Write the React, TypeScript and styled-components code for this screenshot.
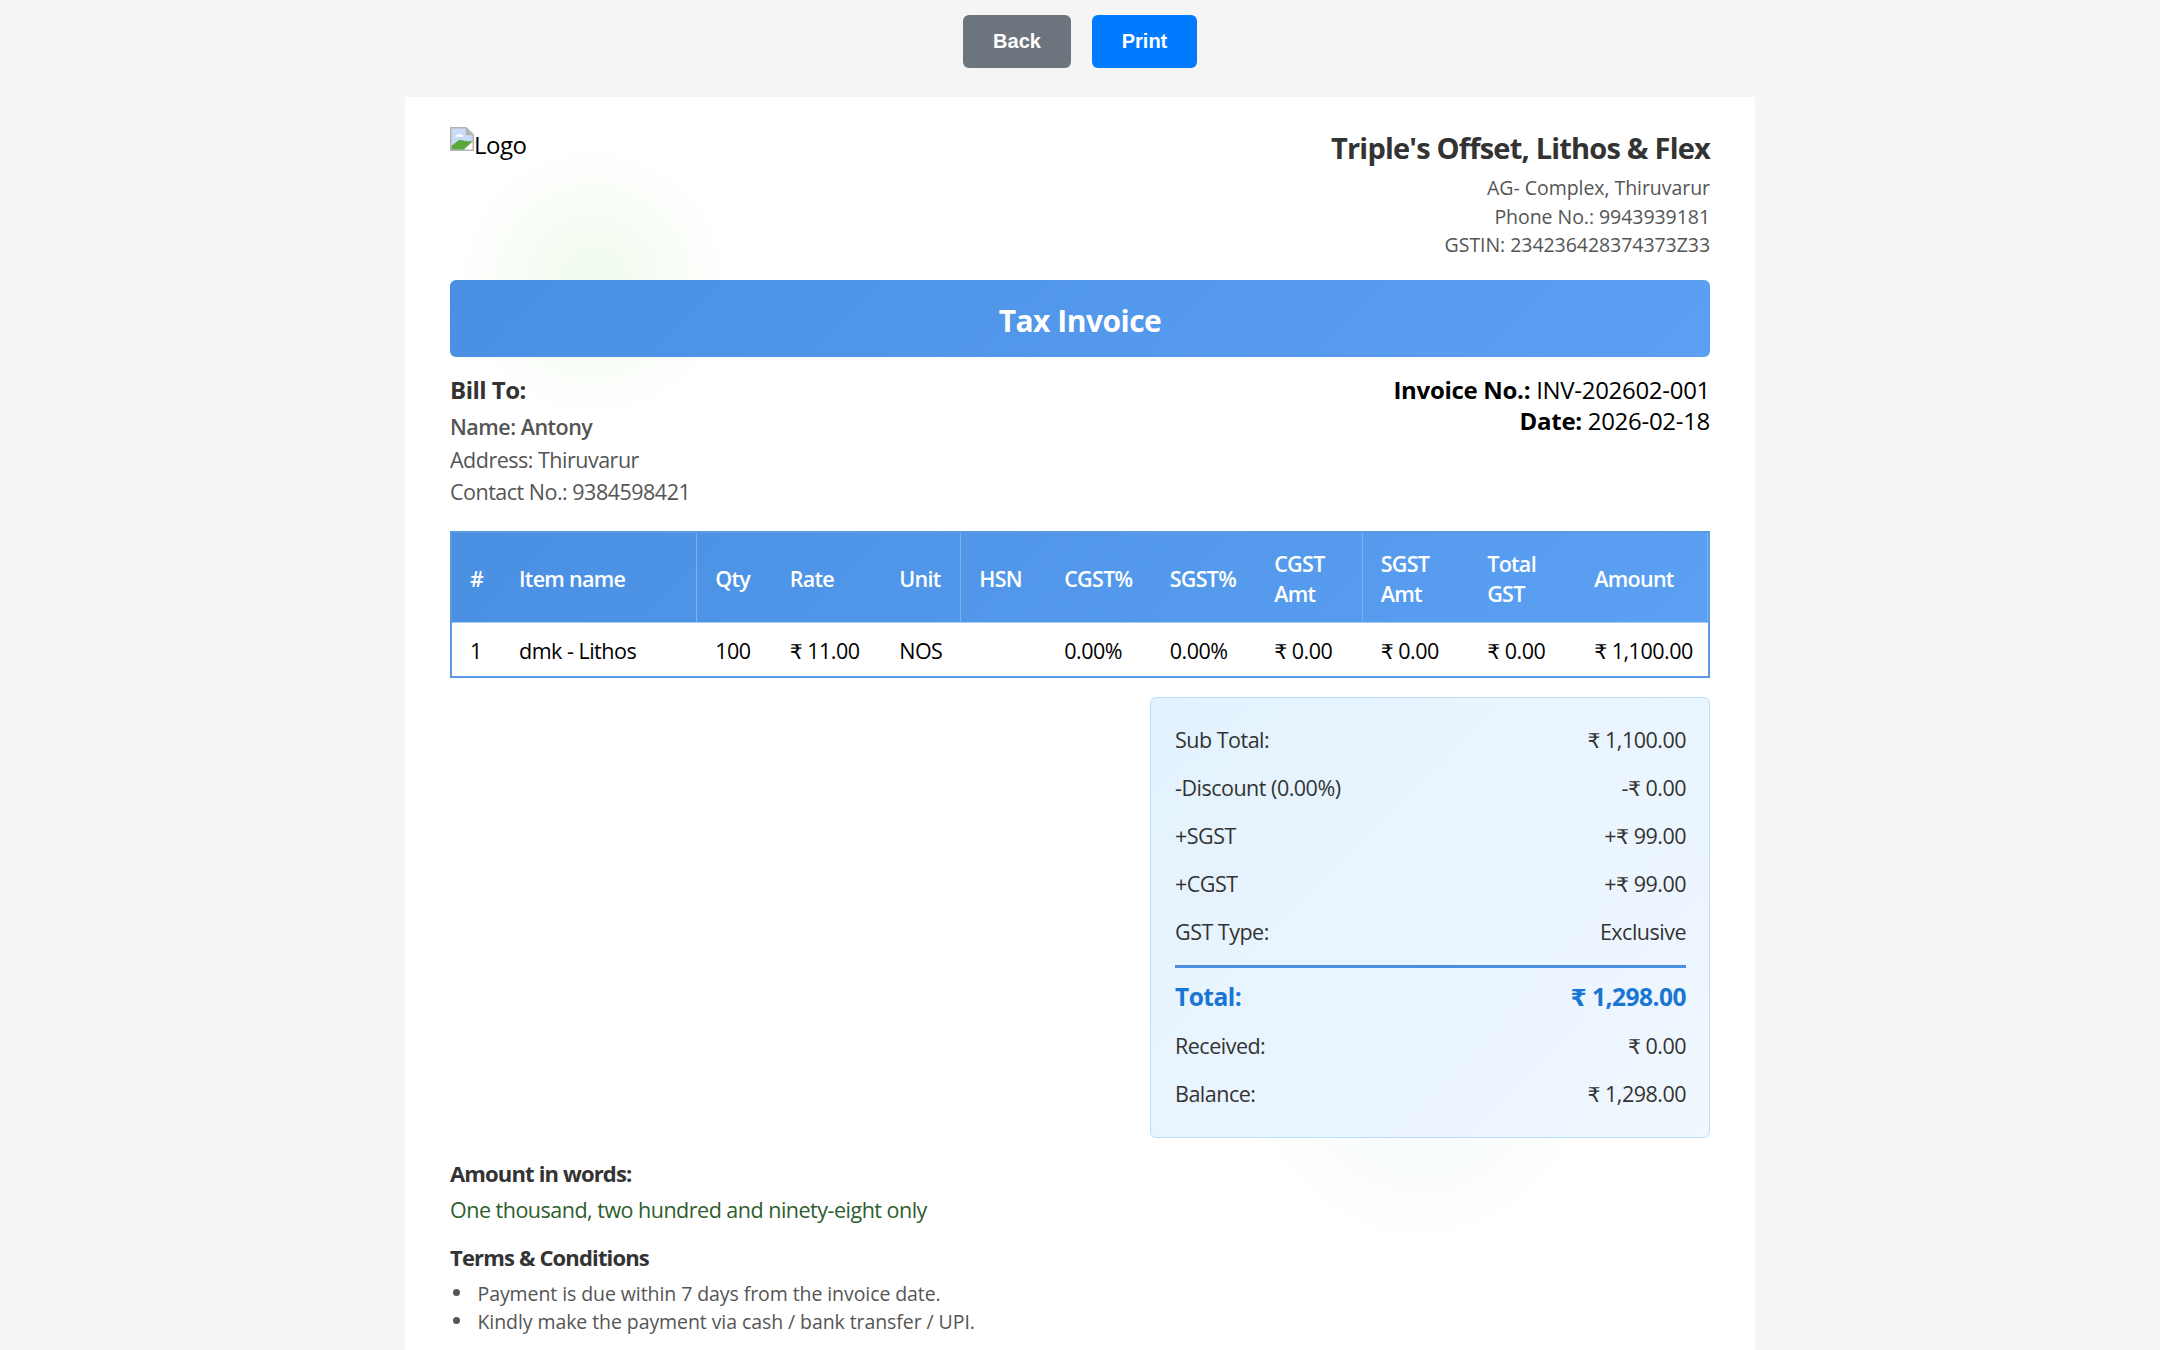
import React from 'react';
import styled, { createGlobalStyle } from 'styled-components';

const GlobalStyle = createGlobalStyle`
  html, body {
    margin: 0;
    padding: 0;
    height: 1350px;
    overflow: hidden;
    background: #f5f5f5;
  }
  * {
    box-sizing: border-box;
  }
`;

const Toolbar = styled.div`
  display: flex;
  justify-content: center;
  gap: 21px;
  padding: 15px 0 29px;
`;

const ActionButton = styled.button<{ $color: string }>`
  width: ${(p) => (p.$color === '#6c757d' ? 108 : 105)}px;
  height: 53px;
  border: none;
  border-radius: 6px;
  background: ${(p) => p.$color};
  color: #fff;
  font-family: 'Liberation Sans', Arial, sans-serif;
  font-size: 20px;
  font-weight: 700;
  padding: 0;
`;

const Sheet = styled.div`
  width: 1350px;
  height: 1253px;
  margin: 0 auto;
  padding: 30px 45px 0;
  overflow: hidden;
  color: #333;
  font-family: 'Open Sans', sans-serif;
  letter-spacing: -0.5px;
  background:
    radial-gradient(circle 140px at 188px 185px, #f0fbec 0%, rgba(240, 251, 236, 0) 100%),
    radial-gradient(circle 181px at 1015px 977px, #f4faf9 0%, rgba(244, 250, 249, 0) 100%),
    #fff;
`;

const Header = styled.header`
  display: flex;
  justify-content: space-between;
  align-items: flex-start;
  margin-bottom: 20.5px;
`;

const LogoSlot = styled.div`
  display: flex;
  align-items: flex-start;
  color: #000;
  font-size: 24px;
  line-height: 36px;
`;

const CompanyBlock = styled.div`
  text-align: right;
`;

const CompanyName = styled.h2`
  margin: 0 0 5px;
  font-size: 29px;
  line-height: 42px;
  font-weight: 700;
  letter-spacing: -0.8px;
  color: #333;
`;

const CompanyLine = styled.div`
  font-size: 19.5px;
  line-height: 28.5px;
  letter-spacing: -0.05px;
  color: #555;
`;

const Banner = styled.div`
  height: 77px;
  border-radius: 6px;
  background: linear-gradient(135deg, #4a90e2 0%, #5ba0f2 100%);
  color: #fff;
  font-size: 30px;
  font-weight: 700;
  line-height: 82px;
  text-align: center;
`;

const MetaRow = styled.section`
  display: flex;
  justify-content: space-between;
  margin: 17px 0 22.5px;
`;

const BillTitle = styled.div`
  font-size: 24px;
  font-weight: 700;
  line-height: 31px;
  color: #333;
  margin-bottom: 6px;
`;

const BillLine = styled.div<{ $strong?: boolean }>`
  font-size: 21.5px;
  line-height: 32.5px;
  color: #555;
  font-weight: ${(p) => (p.$strong ? 600 : 400)};
`;

const InvoiceMeta = styled.div`
  text-align: right;
  font-size: 24px;
  line-height: 31px;
  letter-spacing: -0.3px;
  color: #000;
  b {
    font-weight: 700;
  }
`;

const ItemsTable = styled.table`
  width: 1260px;
  border-collapse: separate;
  border-spacing: 0;
  table-layout: fixed;
  border: 2px solid #5a9ae6;
  font-size: 21.5px;
  color: #000;
`;

const HeadRow = styled.tr`
  background: linear-gradient(135deg, #4a90e2 0%, #5ba0f2 100%);
`;

const Th = styled.th<{ $w: number; $line?: boolean }>`
  width: ${(p) => p.$w}px;
  height: 89px;
  padding: 2px 0 0 18px;
  color: #fff;
  font-size: 21.5px;
  font-weight: 600;
  line-height: 30px;
  letter-spacing: -0.7px;
  text-align: left;
  border-right: ${(p) => (p.$line ? '1px solid #7fb0ec' : 'none')};
`;

const Td = styled.td`
  height: 54px;
  padding: 2px 0 0 18px;
  line-height: 30px;
  white-space: nowrap;
  border-top: 1px solid #a9cbf3;
`;

const Rupee = styled.span`
  font-family: 'DejaVu Sans', sans-serif;
  font-size: 0.95em;
  line-height: 1;
`;

const SummaryRow = styled.section`
  display: flex;
  justify-content: flex-end;
  margin: 19px 0 20px;
`;

const SummaryBox = styled.div`
  width: 560px;
  height: 441px;
  padding: 17px 23px 0 24px;
  border: 1.5px solid #bbdefb;
  border-radius: 6px;
  background: linear-gradient(135deg, #e3f2fd 0%, #f0f7ff 100%);
`;

const SummaryLine = styled.div<{ $total?: boolean }>`
  display: flex;
  justify-content: space-between;
  align-items: center;
  height: ${(p) => (p.$total ? 50 : 48)}px;
  font-size: ${(p) => (p.$total ? 24.5 : 21.5)}px;
  font-weight: ${(p) => (p.$total ? 700 : 400)};
  color: ${(p) => (p.$total ? '#1976d2' : '#333')};
`;

const SummaryRule = styled.hr`
  height: 3px;
  margin: 10px 0 3px;
  border: none;
  background: #4a90e2;
`;

const SectionTitle = styled.div`
  font-size: 22px;
  font-weight: 700;
  line-height: 30px;
  letter-spacing: -0.85px;
  color: #333;
`;

const Words = styled.div`
  font-size: 21.5px;
  line-height: 30px;
  color: #2e5d2e;
  margin: 7px 0 17px;
`;

const Terms = styled.ul`
  margin: 8px 0 0;
  padding: 0;
  list-style: none;
  font-size: 19.5px;
  line-height: 28px;
  letter-spacing: -0.08px;
  color: #555;
`;

const Term = styled.li`
  display: flex;
  &::before {
    content: '';
    flex: none;
    width: 7px;
    height: 7px;
    margin: 9px 17.5px 0 3px;
    border-radius: 50%;
    background: #555;
  }
`;

const BrokenImage = () => (
  <svg width="24" height="24" viewBox="0 0 16 16" style={{ flex: 'none' }}>
    <path d="M0 0H11L16 5V16H0Z" fill="#b4b4b4" />
    <path d="M1 1H10.5V5.5H15V9.5L9 15H1Z" fill="#c9dbf9" />
    <path d="M3.5 6.5C4 4 8 4 9 6.5Z" fill="#fff" />
    <path d="M1 15V12.5L5.5 9C7.5 8 9.5 9.5 12 9.5L15 9.5L9 15Z" fill="#5aa83a" />
    <path d="M15 10V15H9.5Z" fill="#fff" />
  </svg>
);

// the rupee sign comes from another family, Open Sans draws it too small
const money = (text: string) => {
  const at = text.indexOf('₹');
  if (at < 0) return text;
  return (
    <>
      {text.slice(0, at)}
      <Rupee>₹</Rupee>
      {text.slice(at + 1)}
    </>
  );
};

const columns: [string, number, boolean?][] = [
  ['#', 49],
  ['Item name', 196.2, true],
  ['Qty', 74.5],
  ['Rate', 109.5],
  ['Unit', 80, true],
  ['HSN', 85],
  ['CGST%', 105.5],
  ['SGST%', 104.5],
  ['CGST Amt', 106.5, true],
  ['SGST Amt', 106.5],
  ['Total GST', 107],
  ['Amount', 131.8],
];

const rowCells = ['1', 'dmk - Lithos', '100', '₹ 11.00', 'NOS', '', '0.00%', '0.00%', '₹ 0.00', '₹ 0.00', '₹ 0.00', '₹ 1,100.00'];

const summaryTop = [
  ['Sub Total:', '₹ 1,100.00'],
  ['-Discount (0.00%)', '-₹ 0.00'],
  ['+SGST', '+₹ 99.00'],
  ['+CGST', '+₹ 99.00'],
  ['GST Type:', 'Exclusive'],
];

const App: React.FC = () => {
  return (
    <>
      <GlobalStyle />
      <Toolbar>
        <ActionButton $color="#6c757d">Back</ActionButton>
        <ActionButton $color="#007bff">Print</ActionButton>
      </Toolbar>
      <Sheet>
        <Header>
          <LogoSlot>
            <BrokenImage />
            Logo
          </LogoSlot>
          <CompanyBlock>
            <CompanyName>Triple's Offset, Lithos &amp; Flex</CompanyName>
            <CompanyLine>AG- Complex, Thiruvarur</CompanyLine>
            <CompanyLine>Phone No.: 9943939181</CompanyLine>
            <CompanyLine>GSTIN: 234236428374373Z33</CompanyLine>
          </CompanyBlock>
        </Header>
        <Banner>Tax Invoice</Banner>
        <MetaRow>
          <div>
            <BillTitle>Bill To:</BillTitle>
            <BillLine $strong>Name: Antony</BillLine>
            <BillLine>Address: Thiruvarur</BillLine>
            <BillLine>Contact No.: 9384598421</BillLine>
          </div>
          <InvoiceMeta>
            <div>
              <b>Invoice No.:</b> INV-202602-001
            </div>
            <div>
              <b>Date:</b> 2026-02-18
            </div>
          </InvoiceMeta>
        </MetaRow>
        <ItemsTable>
          <thead>
            <HeadRow>
              {columns.map(([label, w, line]) => (
                <Th key={label} $w={w} $line={line}>
                  {label}
                </Th>
              ))}
            </HeadRow>
          </thead>
          <tbody>
            <tr>
              {rowCells.map((cell, i) => (
                <Td key={i}>{money(cell)}</Td>
              ))}
            </tr>
          </tbody>
        </ItemsTable>
        <SummaryRow>
          <SummaryBox>
            {summaryTop.map(([label, value]) => (
              <SummaryLine key={label}>
                <span>{label}</span>
                <span>{money(value)}</span>
              </SummaryLine>
            ))}
            <SummaryRule />
            <SummaryLine $total>
              <span>Total:</span>
              <span>{money('₹ 1,298.00')}</span>
            </SummaryLine>
            <SummaryLine>
              <span>Received:</span>
              <span>{money('₹ 0.00')}</span>
            </SummaryLine>
            <SummaryLine>
              <span>Balance:</span>
              <span>{money('₹ 1,298.00')}</span>
            </SummaryLine>
          </SummaryBox>
        </SummaryRow>
        <SectionTitle>Amount in words:</SectionTitle>
        <Words>One thousand, two hundred and ninety-eight only</Words>
        <SectionTitle>Terms &amp; Conditions</SectionTitle>
        <Terms>
          <Term>Payment is due within 7 days from the invoice date.</Term>
          <Term>Kindly make the payment via cash / bank transfer / UPI.</Term>
        </Terms>
      </Sheet>
    </>
  );
};

export default App;
